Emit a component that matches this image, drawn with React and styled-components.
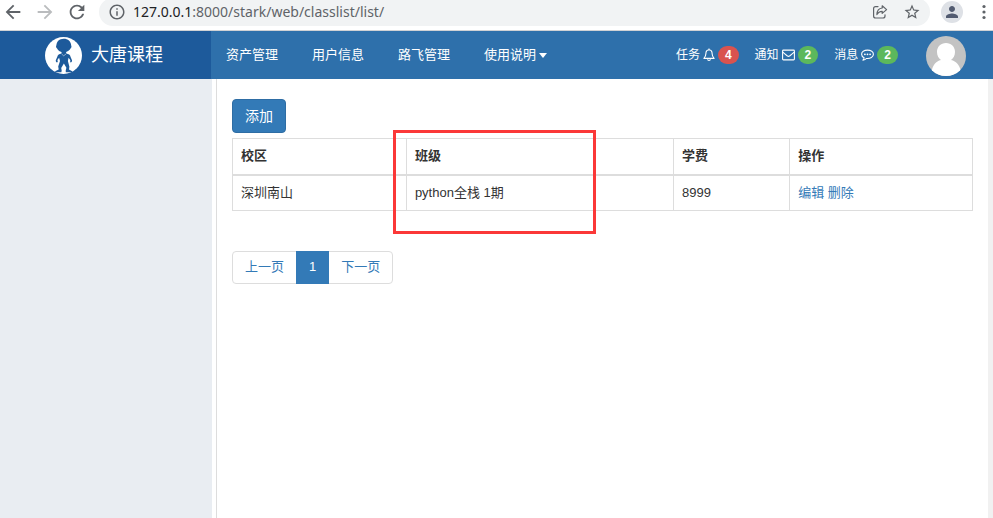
import React, {useState} from "react";
import styled, { createGlobalStyle, css } from "styled-components";
import { MdArrowBack, MdArrowForward, MdRefresh, MdInfoOutline, MdStarBorder, MdPerson } from "react-icons/md";

const menus = [
    {title:'资产管理'},
    {title:'用户信息'},
    {title:'路飞管理'},
    {title:'使用说明', dropdown:true},
]

const columns = [
    {title:'校区', width:'23.5%'},
    {title:'班级', width:'36.1%'},
    {title:'学费', width:'15.7%'},
    {title:'操作', width:'24.7%'},
]

const classList = [
    {id:1, school:'深圳南山', name:'python全栈 1期', price:8999},
]

const BellIcon = () => (
    <svg width="12" height="14" viewBox="0 0 12 14" fill="none" stroke="currentColor" strokeLinejoin="round">
        <path d="M6 1.8C3.7 2.1 2.9 3.8 2.9 5.6C2.9 8 2.2 9.2.9 10.4H11.1C9.8 9.2 9.1 8 9.1 5.6C9.1 3.8 8.3 2.1 6 1.8Z" strokeWidth="1.1" />
        <path d="M6 .5V1.8M4.6 11.2C4.7 12.9 7.3 12.9 7.4 11.2" strokeWidth="1.1" />
    </svg>
)

const EnvelopeIcon = () => (
    <svg width="13" height="14" viewBox="0 0 13 14" fill="none" stroke="currentColor" strokeLinejoin="round">
        <rect x=".6" y="2.1" width="11.8" height="9.8" rx=".8" strokeWidth="1.1" />
        <path d="M.8 4.2C2.5 5.8 4 6.9 5.3 7.9C6.1 8.5 6.9 8.5 7.7 7.9C9 6.9 10.5 5.8 12.2 4.2" strokeWidth="1.1" />
    </svg>
)

const CommentIcon = () => (
    <svg width="13" height="14" viewBox="0 0 13 14" fill="none" stroke="currentColor" strokeLinejoin="round">
        <path d="M6.5 2.1C3.2 2.1.6 3.9.6 6.3C.6 7.8 1.6 9.1 3.1 9.8C3 10.8 2.5 11.6 1.9 12.2C3.4 12 4.6 11.4 5.4 10.5C9.4 10.9 12.4 9 12.4 6.3C12.4 3.9 9.8 2.1 6.5 2.1Z" strokeWidth="1.1" />
        <g fill="currentColor" stroke="none">
            <circle cx="3.9" cy="6.3" r=".9" />
            <circle cx="6.5" cy="6.3" r=".9" />
            <circle cx="9.1" cy="6.3" r=".9" />
        </g>
    </svg>
)

const notices = [
    {title:'任务', count:4, icon:<BellIcon />, color:'#d9534f'},
    {title:'通知', count:2, icon:<EnvelopeIcon />, color:'#5cb85c'},
    {title:'消息', count:2, icon:<CommentIcon />, color:'#5cb85c'},
]

const ShareIcon = () => (
    <svg width="16" height="16" viewBox="0 0 16 16" fill="none" stroke="currentColor" strokeWidth="1.2" strokeLinejoin="round" strokeLinecap="round">
        <path d="M6 2.6H3.6C2.3 2.6 1.6 3.3 1.6 4.6V12C1.6 13.3 2.3 14 3.6 14H11C12.3 14 13 13.3 13 12V10.8" />
        <path d="M10.2 1.8L14.6 5.6L10.2 9.4V7.3C7.6 7.3 6 8.4 4.9 10.6C5 7 6.8 4.3 10.2 4Z" />
    </svg>
)

const MoreIcon = () => (
    <svg width="4" height="16" viewBox="0 0 4 16" fill="currentColor">
        <circle cx="2" cy="2.5" r="1.6" />
        <circle cx="2" cy="8" r="1.6" />
        <circle cx="2" cy="13.5" r="1.6" />
    </svg>
)

const Logo = () => (
    <svg width="37" height="37" viewBox="0 0 37 37">
        <circle cx="18.5" cy="18.5" r="18.5" fill="#fff" />
        <g fill="#1d5a9b">
            <path d="M18.6 1.8C22.8 1.7 26 4.4 26.2 8.4C26.7 9.2 26.5 10.6 25.7 11.3C24.8 13.7 22 15.2 18.8 15.2C15.5 15.2 13 13.8 12.1 11.5C11 10.7 10.7 9.2 11.4 8.3C11.5 4.5 14.5 1.9 18.6 1.8Z" />
            <path d="M16.7 14.5H21L21.3 16.4C23.7 16.8 25.2 17.8 25.6 19.9L27 23.2C27.3 24.3 26.4 25.5 25.5 25.4L25.1 24.3L25.4 23.2L23.6 20.7L22.9 23.9L24.4 29.7L24 32.5L27.2 34.2V35.2H20.8L20.7 33.6L21.4 30.8L18.9 26.5L16.2 31L16.7 33.6L16.4 35.2H10.2V34.3L13.7 32.4L13.2 29.5L15 24L14.1 20.8L12.4 23.1L12.8 24.5L12.2 25.4C11.2 25.4 10.6 24.4 10.8 23.2L12.3 19.8C12.7 17.8 14.2 16.8 16.4 16.4Z" />
        </g>
        <path d="M16.6 17L18.7 18.8L21 17" fill="none" stroke="#fff" strokeWidth=".5" />
    </svg>
)

const UserPhoto = () => (
    <svg width="40" height="40" viewBox="0 0 40 40">
        <clipPath id="photo"><circle cx="20" cy="20" r="20" /></clipPath>
        <g clipPath="url(#photo)">
            <rect width="40" height="40" fill="#c3c3c3" />
            <path fill="#fff" d="M11 16C11 10.8 14.8 7 20 7C25.2 7 29 10.8 29 16C29 19.3 27.4 22.4 25 24C30.5 25.2 33.6 29.5 34.5 34V42H6V34C6.9 29.5 9.7 25.2 15 24C12.6 22.4 11 19.3 11 16Z" />
        </g>
    </svg>
)

const App = () => {

    const [page, setPage] = useState(1);
    const url = '/stark/web/classlist/list/';

    const handleChangePage = (e, num) => {
        e.preventDefault();
        if(num > 0) {
            setPage(num)
        }
    }

    return (
        <>
        <GlobalStyle />
        <Page>
            <BrowserBar>
                <BarButtons>
                    <BarButton aria-label="back"><MdArrowBack size={22} /></BarButton>
                    <BarButton aria-label="forward" isOff><MdArrowForward size={22} /></BarButton>
                    <BarButton aria-label="reload"><MdRefresh size={22} /></BarButton>
                </BarButtons>
                <AddressBox>
                    <MdInfoOutline size={18} />
                    <Address><b>127.0.0.1</b>:8000{url}</Address>
                    <BarButton aria-label="share"><ShareIcon /></BarButton>
                    <BarButton aria-label="bookmark"><MdStarBorder size={18} /></BarButton>
                </AddressBox>
                <ProfileButton aria-label="profile"><MdPerson size={18} /></ProfileButton>
                <BarButton aria-label="menu"><MoreIcon /></BarButton>
            </BrowserBar>

            <Header>
                <Brand href="#">
                    <Logo />
                    <span>大唐课程</span>
                </Brand>
                <Nav>
                    {menus.map(menu => (
                        <NavLink href="#" key={menu.title}>{menu.title}{menu.dropdown && <Caret />}</NavLink>
                    ))}
                </Nav>
                <Notices>
                    {notices.map(notice => (
                        <NoticeLink href="#" key={notice.title}>
                            {notice.title}
                            {notice.icon}
                            <Badge color={notice.color}>{notice.count}</Badge>
                        </NoticeLink>
                    ))}
                </Notices>
                <UserLink href="#" aria-label="user"><UserPhoto /></UserLink>
            </Header>

            <Body>
                <Sidebar />
                <Content>
                    <AddButton type="button">添加</AddButton>
                    <TableWrap>
                        <Table>
                            <thead>
                                <tr>
                                    {columns.map(col => <Th key={col.title} width={col.width}>{col.title}</Th>)}
                                </tr>
                            </thead>
                            <tbody>
                                {classList.map(item => (
                                    <tr key={item.id}>
                                        <Td>{item.school}</Td>
                                        <Td>{item.name}</Td>
                                        <Td>{item.price}</Td>
                                        <Td><TextLink href="#">编辑</TextLink> <TextLink href="#">删除</TextLink></Td>
                                    </tr>
                                ))}
                            </tbody>
                        </Table>
                        <Highlight />
                    </TableWrap>
                    <Pagination>
                        <li><PageLink href="#" onClick={e => handleChangePage(e, page - 1)}>上一页</PageLink></li>
                        <li><PageLink href="#" isActive onClick={e => handleChangePage(e, page)}>{page}</PageLink></li>
                        <li><PageLink href="#" onClick={e => handleChangePage(e, page + 1)}>下一页</PageLink></li>
                    </Pagination>
                </Content>
                <ScrollTrack />
            </Body>
        </Page>
        </>
    )
}
export default App

const GlobalStyle = createGlobalStyle`
* {
    box-sizing: border-box;
}
body {
    margin: 0;
    background: #fff;
    color: #333;
    font-family: "Liberation Sans", "Noto Sans CJK SC", sans-serif;
    font-size: 13px;
    line-height: 18px;
}
a {
    text-decoration: none;
}
svg {
    display: block;
    flex: none;
}
button {
    font: inherit;
    cursor: pointer;
}
`

const Page = styled.div`
    display: flex;
    flex-direction: column;
    min-height: 100vh;
`

const BrowserBar = styled.div`
    display: flex;
    align-items: center;
    height: 31px;
    padding: 0 7px 7px 2px;
    border-bottom: 1px solid #d0d2d5;
    color: #5f6368;
    overflow: hidden;
`

const BarButtons = styled.div`
    display: flex;
    gap: 10px;
    margin-right: 11px;
`

const BarButton = styled.button.withConfig({shouldForwardProp: p => p !== 'isOff'})`
    display: flex;
    padding: 0;
    border: 0;
    background: none;
    color: ${props=>props.isOff ? '#babcbe' : '#5f6368'};
`

const AddressBox = styled.div`
    display: flex;
    flex: 1;
    align-items: center;
    gap: 7px;
    height: 28px;
    padding: 0 9px;
    border-radius: 14px;
    background: #f1f3f4;
    ${BarButton} + ${BarButton} {
        margin-left: 8px;
    }
`

const Address = styled.span`
    flex: 1;
    font-family: "Noto Sans", "Open Sans", sans-serif;
    font-size: 14px;
    color: #5f6368;
    b {
        font-weight: 400;
        color: #202124;
    }
`

const ProfileButton = styled.button`
    display: flex;
    align-items: center;
    justify-content: center;
    width: 22px;
    height: 22px;
    margin: 0 19px 0 11px;
    padding: 0;
    border: 0;
    border-radius: 50%;
    background: #dee1e6;
    color: #525b70;
`

const Header = styled.header`
    display: flex;
    align-items: center;
    height: 48px;
    background: #2e70ab;
`

const Brand = styled.a`
    display: flex;
    align-items: center;
    gap: 9px;
    width: 211px;
    height: 48px;
    padding-left: 45px;
    background: #1d5a9b;
    color: #fff;
    font-size: 18px;
`

const Nav = styled.nav`
    display: flex;
    flex: 1;
    gap: 34px;
    padding-left: 15px;
`

const NavLink = styled.a`
    display: flex;
    align-items: center;
    gap: 3px;
    color: #fff;
`

const Caret = styled.i`
    border: 4px solid transparent;
    border-top: 5px solid #fff;
    border-bottom: 0;
`

const Notices = styled.div`
    display: flex;
    gap: 16px;
`

const NoticeLink = styled.a`
    display: flex;
    align-items: center;
    gap: 3px;
    color: #fff;
    font-size: 12px;
`

const Badge = styled.span`
    padding: 0 7px;
    border-radius: 10px;
    background: ${props=>props.color};
    font-weight: 700;
`

const UserLink = styled.a`
    margin: 2px 27px 0 28px;
`

const Body = styled.div`
    display: flex;
    flex: 1;
`

const Sidebar = styled.aside`
    width: 212px;
    margin-right: 4px;
    background: #e9edf2;
`

const Content = styled.main`
    flex: 1;
    padding: 20px 15px;
    border-left: 1px solid #ddd;
`

const ScrollTrack = styled.div`
    width: 5px;
    background: #f1f1f1;
`

const AddButton = styled.button`
    display: block;
    height: 34px;
    margin-bottom: 5px;
    padding: 0 12px;
    border: 1px solid #2e6da4;
    border-radius: 4px;
    background: #337ab7;
    color: #fff;
    font-size: 14px;
`

const TableWrap = styled.div`
    position: relative;
    margin-bottom: 40px;
`

const Table = styled.table`
    width: 100%;
    border-collapse: collapse;
    table-layout: fixed;
`

const cell = css`
    height: 36px;
    padding: 8px;
    border: 1px solid #ddd;
    text-align: left;
`

const Th = styled.th`
    ${cell}
    width: ${props=>props.width};
    border-bottom-width: 2px;
`

const Td = styled.td`
    ${cell}
`

const TextLink = styled.a`
    color: #337ab7;
`

// marks the class column
const Highlight = styled.div`
    position: absolute;
    top: -8px;
    left: 161px;
    width: 203px;
    height: 104px;
    border: 3px solid #fb3838;
    pointer-events: none;
`

const Pagination = styled.ul`
    display: flex;
    margin: 0;
    padding: 0;
    list-style: none;
    li + li {
        margin-left: -1px;
    }
    li:first-child a {
        border-radius: 4px 0 0 4px;
    }
    li:last-child a {
        border-radius: 0 4px 4px 0;
    }
`

const PageLink = styled.a.withConfig({shouldForwardProp: p => p !== 'isActive'})`
    display: block;
    position: relative;
    z-index: ${props=>props.isActive ? 1 : 0};
    height: 33px;
    padding: 6px 12px;
    border: 1px solid ${props=>props.isActive ? '#337ab7' : '#ddd'};
    background: ${props=>props.isActive ? '#337ab7' : '#fff'};
    color: ${props=>props.isActive ? '#fff' : '#337ab7'};
`
